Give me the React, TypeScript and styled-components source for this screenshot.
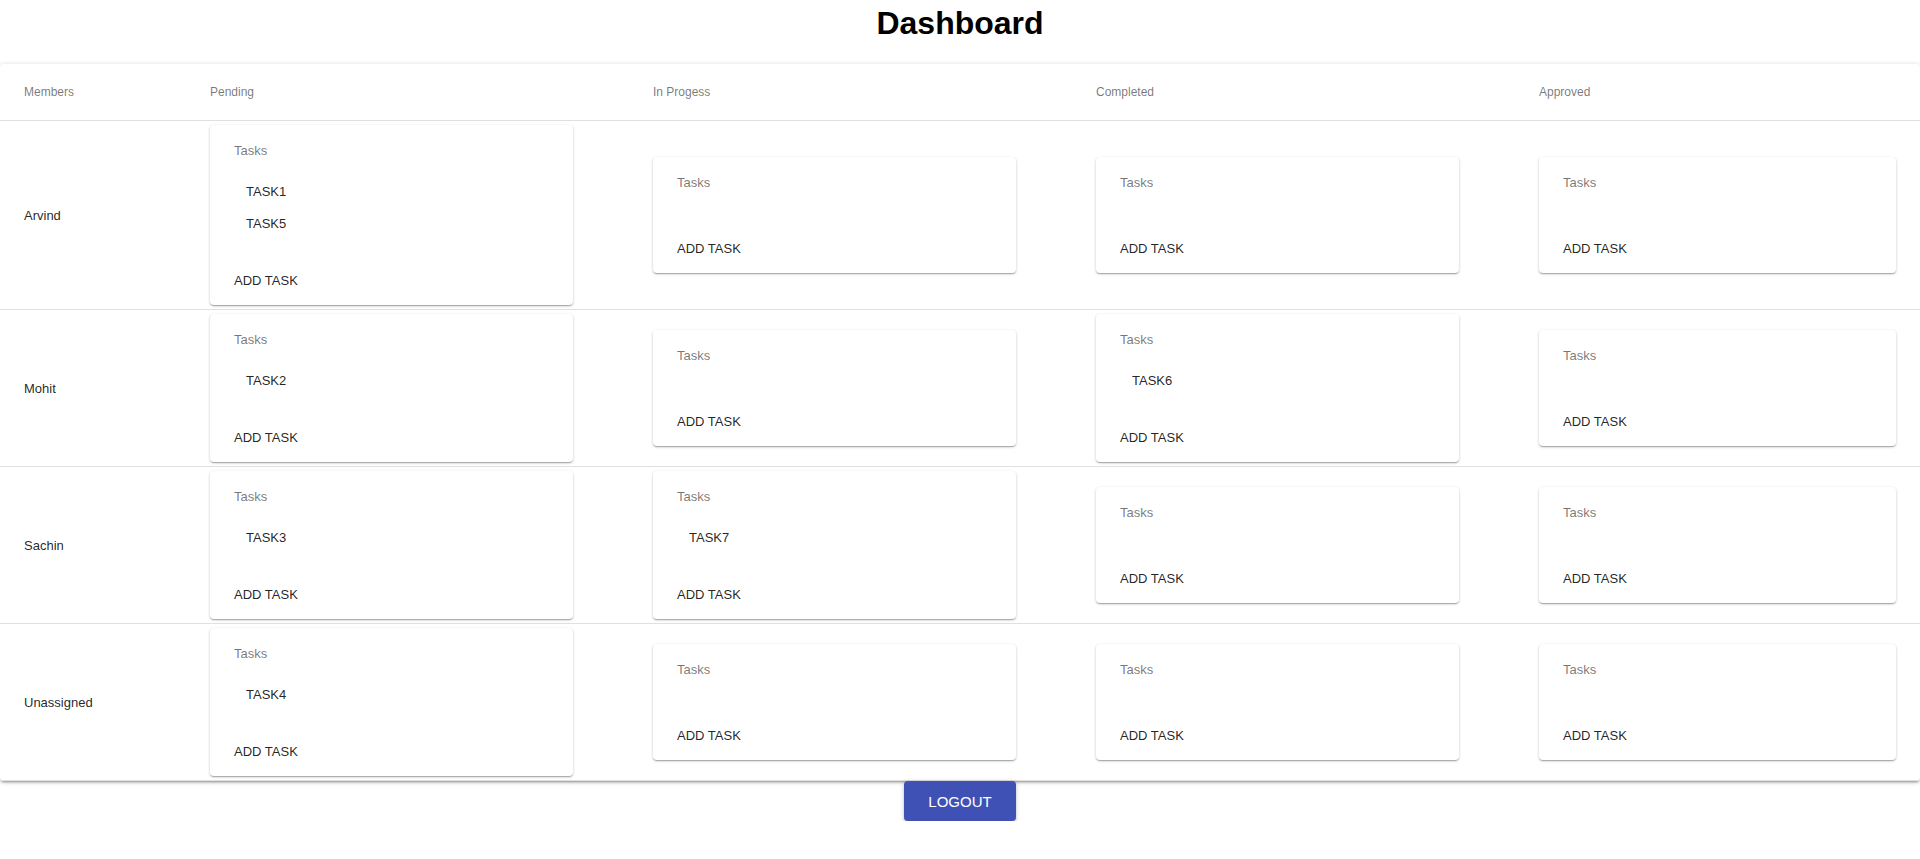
import React from "react";
import styled, { createGlobalStyle } from "styled-components";

const GlobalStyle = createGlobalStyle`
  body {
    margin: 0;
    background: #fff;
    font-family: "Liberation Sans", Arial, Helvetica, sans-serif;
  }
`;

const STATUSES = ["Pending", "In Progess", "Completed", "Approved"];

interface MemberRow {
  name: string;
  tasks: string[][];
}

const rows: MemberRow[] = [
  { name: "Arvind", tasks: [["TASK1", "TASK5"], [], [], []] },
  { name: "Mohit", tasks: [["TASK2"], [], ["TASK6"], []] },
  { name: "Sachin", tasks: [["TASK3"], ["TASK7"], [], []] },
  { name: "Unassigned", tasks: [["TASK4"], [], [], []] },
];

const Page = styled.div`
  display: flex;
  flex-direction: column;
  align-items: center;
`;

const Heading = styled.h1`
  margin: 5px 0 22px;
  font-size: 32px;
  line-height: 37px;
  font-weight: 700;
  color: #000;
`;

const Paper = styled.div`
  align-self: stretch;
  background: #fff;
  border-radius: 4px;
  box-shadow: 0px 1px 5px 0px rgba(0, 0, 0, 0.2),
    0px 2px 2px 0px rgba(0, 0, 0, 0.14), 0px 3px 1px -2px rgba(0, 0, 0, 0.12);
`;

const Row = styled.div<{ head?: boolean }>`
  display: grid;
  grid-template-columns: 186px 443px 443px 443px 1fr;
  align-items: center;
  min-height: ${({ head }) => (head ? "56px" : "48px")};
  border-bottom: 1px solid rgb(224, 224, 224);
`;

const Cell = styled.div<{ head?: boolean }>`
  padding: 4px 56px 4px 24px;
  font-size: ${({ head }) => (head ? "12px" : "13px")};
  font-weight: ${({ head }) => (head ? 500 : 400)};
  color: ${({ head }) => (head ? "rgba(0, 0, 0, 0.54)" : "rgba(0, 0, 0, 0.87)")};
  &:last-child {
    padding-right: 24px;
  }
`;

const Card = styled.div`
  background: #fff;
  border-radius: 4px;
  box-shadow: 0px 1px 3px 0px rgba(0, 0, 0, 0.2),
    0px 1px 1px 0px rgba(0, 0, 0, 0.14), 0px 2px 1px -1px rgba(0, 0, 0, 0.12);
`;

const CardBody = styled.div`
  padding: 16px 24px 0;
`;

const CardTitle = styled.div`
  font-size: 13px;
  line-height: 20px;
  color: rgba(0, 0, 0, 0.54);
`;

const TaskList = styled.ul`
  list-style: none;
  margin: 15px 0 0;
  padding: 0;
`;

const TaskItem = styled.li`
  height: 32px;
  line-height: 32px;
  padding-left: 12px;
  font-size: 13px;
  color: rgba(0, 0, 0, 0.87);
`;

const CardActions = styled.div`
  display: flex;
  padding: 22px 8px 7px;
`;

const TextButton = styled.button`
  height: 36px;
  padding: 0 16px;
  border: 0;
  border-radius: 4px;
  background: transparent;
  font-family: inherit;
  font-size: 13px;
  font-weight: 500;
  text-transform: uppercase;
  color: rgba(0, 0, 0, 0.87);
  cursor: pointer;
`;

const LogoutButton = styled.button`
  height: 40px;
  padding: 0 24px;
  border: 0;
  border-radius: 4px;
  background: #3f51b5;
  color: #fff;
  font-family: inherit;
  font-size: 15px;
  font-weight: 500;
  text-transform: uppercase;
  cursor: pointer;
  box-shadow: 0px 1px 5px 0px rgba(0, 0, 0, 0.2),
    0px 2px 2px 0px rgba(0, 0, 0, 0.14), 0px 3px 1px -2px rgba(0, 0, 0, 0.12);
`;

function TaskCard({ tasks }: { tasks: string[] }): JSX.Element {
  return (
    <Card>
      <CardBody>
        <CardTitle>Tasks</CardTitle>
        <TaskList>
          {tasks.map((t) => (
            <TaskItem key={t}>{t}</TaskItem>
          ))}
        </TaskList>
      </CardBody>
      <CardActions>
        <TextButton>Add Task</TextButton>
      </CardActions>
    </Card>
  );
}

export default function App(): JSX.Element {
  return (
    <Page>
      <GlobalStyle />
      <Heading>Dashboard</Heading>
      <Paper>
        <Row head>
          <Cell head>Members</Cell>
          {STATUSES.map((s) => (
            <Cell head key={s}>
              {s}
            </Cell>
          ))}
        </Row>
        {rows.map((row) => (
          <Row key={row.name}>
            <Cell>{row.name}</Cell>
            {row.tasks.map((list, i) => (
              <Cell key={STATUSES[i]}>
                <TaskCard tasks={list} />
              </Cell>
            ))}
          </Row>
        ))}
      </Paper>
      <LogoutButton>Logout</LogoutButton>
    </Page>
  );
}
